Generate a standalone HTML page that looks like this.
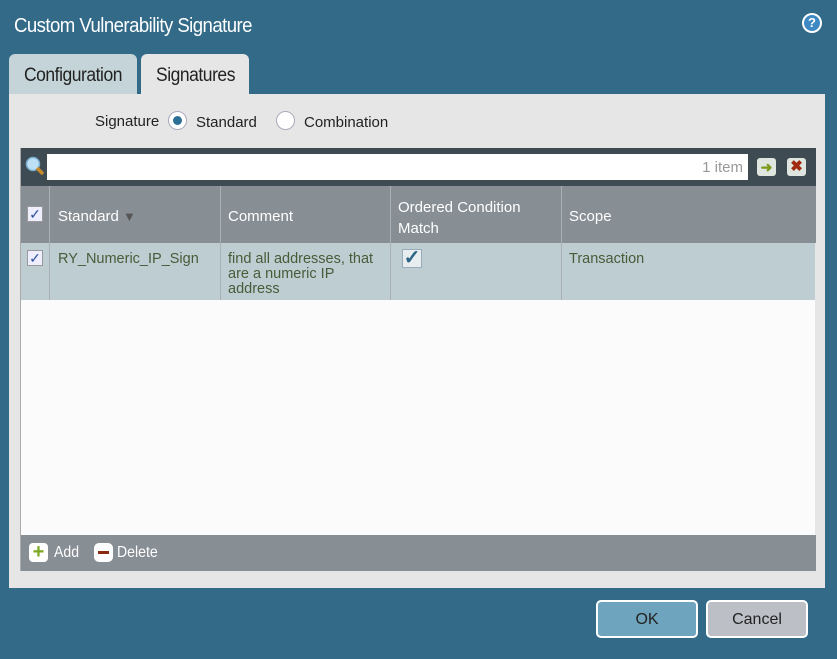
<!DOCTYPE html>
<html><head><style>
*{margin:0;padding:0;box-sizing:border-box}
body{width:837px;height:659px;background:#326a88;font-family:"Liberation Sans",sans-serif;position:relative;overflow:hidden}
.a{position:absolute}
.t{color:#fff;font-size:20px;letter-spacing:-0.6px;transform:scaleX(.93);transform-origin:left}
.tab{font-size:19px;color:#222;letter-spacing:-0.5px;border-radius:6px 6px 0 0;padding-top:11px}
.tab span{display:inline-block;transform:scaleX(.92);transform-origin:left}
.h{color:#fff;font-size:15px}
.c{color:#4a5b3a;font-size:14.5px;line-height:15px}
.sep{width:1px;background:#a9b0b5}
.btn{border:2px solid #fff;border-radius:5px;font-size:16px;text-align:center;line-height:36px;color:#222}
</style></head><body>
<div class="a t" style="left:14px;top:15px">Custom Vulnerability Signature</div>
<div class="a" style="left:802px;top:13px;width:20px;height:20px;border-radius:50%;background:#fff;"><div style="margin:2px;width:16px;height:16px;border-radius:50%;background:#3e89c4;color:#fff;font-weight:bold;font-size:13px;text-align:center;line-height:16px">?</div></div>
<div class="a tab" style="left:9px;top:54px;width:128px;height:40px;background:#c4d4d8;padding-left:15px"><span>Configuration</span></div>
<div class="a tab" style="left:141px;top:54px;width:108px;height:41px;background:#e6e6e6;padding-left:15px"><span>Signatures</span></div>
<div class="a" style="left:9px;top:94px;width:816px;height:494px;background:#e6e6e6"></div>
<div class="a" style="left:95px;top:113px;font-size:15px;color:#222">Signature</div>
<div class="a" style="left:168px;top:111px;width:19px;height:19px;border-radius:50%;background:#fff;border:1px solid #aab"><div style="margin:4px;width:9px;height:9px;border-radius:50%;background:#2e6f95"></div></div>
<div class="a" style="left:196px;top:114px;font-size:15px;color:#222">Standard</div>
<div class="a" style="left:276px;top:111px;width:19px;height:19px;border-radius:50%;background:#fff;border:1px solid #aab"></div>
<div class="a" style="left:304px;top:114px;font-size:15px;color:#222">Combination</div>
<div class="a" style="left:21px;top:148px;width:795px;height:38px;background:#3e4b53"></div>
<svg class="a" style="left:24px;top:155px" width="22" height="22"><circle cx="9" cy="9" r="6.5" fill="#bde0f5" stroke="#7aaed0" stroke-width="1.5"/><line x1="13" y1="13" x2="19" y2="19" stroke="#c88a2a" stroke-width="3.5"/></svg>
<div class="a" style="left:47px;top:154px;width:701px;height:26px;background:#fff;color:#999;font-size:15px;text-align:right;padding:5px 5px 0 0">1 item</div>
<div class="a" style="left:757px;top:158px;width:19px;height:18px;background:#dfe6df;border-radius:3px;color:#7a9a1a;font-weight:bold;font-size:14px;text-align:center;line-height:18px">➜</div>
<div class="a" style="left:787px;top:158px;width:19px;height:18px;background:#dfe6df;border-radius:3px;color:#a02a10;font-weight:bold;font-size:15px;text-align:center;line-height:18px">✖</div>
<div class="a" style="left:21px;top:186px;width:795px;height:57px;background:#878e94"></div>
<div class="a" style="left:21px;top:243px;width:794px;height:57px;background:#bdcdd1"></div>
<div class="a" style="left:21px;top:300px;width:794px;height:235px;background:#fafbfa"></div>
<div class="a" style="left:21px;top:535px;width:795px;height:36px;background:#878e94"></div>
<div class="a" style="left:20px;top:148px;width:1px;height:423px;background:#aaa"></div>
<div class="a sep" style="left:49px;top:186px;height:114px"></div>
<div class="a sep" style="left:220px;top:186px;height:114px"></div>
<div class="a sep" style="left:390px;top:186px;height:114px"></div>
<div class="a sep" style="left:561px;top:186px;height:114px"></div>
<div class="a" style="left:27px;top:206px;width:16px;height:16px;background:#eef;border:1px solid #999;color:#2a4f9a;font-size:14px;line-height:14px;text-align:center">✓</div>
<div class="a" style="left:27px;top:250px;width:16px;height:16px;background:#eef;border:1px solid #999;color:#2a4f9a;font-size:14px;line-height:14px;text-align:center">✓</div>
<div class="a h" style="left:58px;top:208px">Standard <span style="font-size:13px;color:#555">▼</span></div>
<div class="a h" style="left:228px;top:208px">Comment</div>
<div class="a h" style="left:398px;top:197px;line-height:21px">Ordered Condition<br>Match</div>
<div class="a h" style="left:569px;top:208px">Scope</div>
<div class="a c" style="left:58px;top:252px">RY_Numeric_IP_Sign</div>
<div class="a c" style="left:228px;top:252px;width:160px">find all addresses, that are a numeric IP address</div>
<div class="a" style="left:402px;top:249px;width:20px;height:19px;background:#e8eef0;border:1px solid #9ab;color:#2b6485;font-size:20px;line-height:17px;text-align:center;font-weight:bold">✓</div>
<div class="a c" style="left:569px;top:252px">Transaction</div>
<div class="a" style="left:29px;top:543px;width:19px;height:19px;border-radius:4px;background:#fff;color:#7aa820;font-weight:bold;font-size:20px;line-height:19px;text-align:center">+</div>
<div class="a" style="left:54px;top:544px;color:#fff;font-size:16px;transform:scaleX(.88);transform-origin:left">Add</div>
<div class="a" style="left:94px;top:543px;width:19px;height:19px;border-radius:5px;background:#fff"><div style="margin:8px 4px;width:11px;height:3px;background:#8a2a10"></div></div>
<div class="a" style="left:117px;top:544px;color:#fff;font-size:16px;transform:scaleX(.88);transform-origin:left">Delete</div>
<div class="a btn" style="left:596px;top:600px;width:102px;height:38px;background:#6ea4bd">OK</div>
<div class="a btn" style="left:706px;top:600px;width:102px;height:38px;background:#bcbfc6">Cancel</div>
</body></html>
